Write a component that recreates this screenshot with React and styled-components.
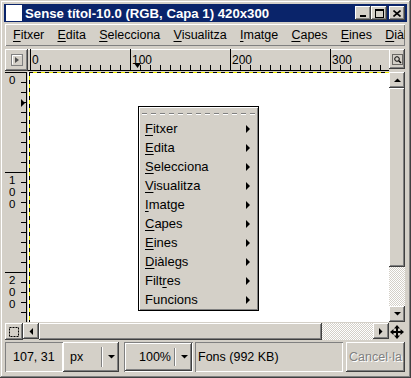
import React from "react";
import styled, { createGlobalStyle, css } from "styled-components";

const FACE = "#d4d0c8";

const raised = css`
  box-shadow: inset -1px -1px #404040, inset 1px 1px #fff, inset -2px -2px #808080,
    inset 2px 2px ${FACE};
`;
const thinRaised = css`
  box-shadow: inset 1px 1px #fff, inset -1px -1px #808080;
`;
const sunken = css`
  box-shadow: inset 1px 1px #808080, inset -1px -1px #fff;
`;

const GlobalStyle = createGlobalStyle`
  * { box-sizing: border-box; }
  html, body { margin: 0; padding: 0; background: ${FACE}; }
  body {
    font-family: "Liberation Sans", Arial, sans-serif;
    font-size: 12.5px;
    color: #000;
  }
`;

const Window = styled.div`
  position: relative;
  width: 411px;
  height: 378px;
  padding: 4px;
  display: flex;
  flex-direction: column;
  background: ${FACE};
  overflow: hidden;
  box-shadow: inset -1px -1px #404040, inset 1px 1px ${FACE}, inset -2px -2px #808080,
    inset 2px 2px #fff;
`;

const TitleBar = styled.div`
  flex: none;
  height: 18px;
  padding: 0 2px;
  display: flex;
  align-items: center;
  background: #0a246a;
  color: #fff;
`;

const AppIcon = styled.div`
  width: 16px;
  height: 16px;
  background: #fff;
`;

const TitleText = styled.span`
  margin-left: 3px;
  font-size: 13.2px;
  font-weight: bold;
  white-space: nowrap;
`;

const TitleButtons = styled.div`
  margin-left: auto;
  display: flex;
`;

const TitleButton = styled.div`
  width: 16px;
  height: 14px;
  margin-left: ${(p) => (p.$gap ? "2px" : "0")};
  display: flex;
  align-items: center;
  justify-content: center;
  background: ${FACE};
  ${raised}
`;

const MenuBar = styled.div`
  flex: none;
  height: 22px;
  margin: 2px 2px 0 1px;
  padding-left: 2px;
  display: flex;
  align-items: center;
  overflow: hidden;
  white-space: nowrap;
  ${thinRaised}
`;

const MenuBarItem = styled.span`
  padding: 0 6.6px;
  &:first-child {
    padding-left: 6px;
  }
`;

const Mnemonic = styled.span`
  text-decoration: underline;
  text-underline-offset: 2px;
`;

const Workspace = styled.div`
  margin: 3px 2px 0 1px;
  display: grid;
  grid-template-columns: 23px 1fr 16px;
  grid-template-rows: 23px 250px 18px;
`;

const CornerButton = styled.div`
  width: 23px;
  height: 22px;
  display: flex;
  align-items: center;
  justify-content: center;
  ${raised}
`;

const ZoomButton = styled.div`
  width: 16px;
  height: 20px;
  display: flex;
  align-items: center;
  justify-content: center;
  ${raised}
`;

const HRulerBox = styled.div`
  overflow: hidden;
  box-shadow: inset 0 1px #fff;
`;

const VRulerBox = styled.div`
  overflow: hidden;
`;

const Canvas = styled.div`
  background: repeating-linear-gradient(90deg, #000 0 4px, #ee0 4px 8px) 1px 0 / 100% 1px
      no-repeat,
    repeating-linear-gradient(180deg, #000 0 4px, #ee0 4px 8px) 1px 0 / 1px 100% no-repeat,
    #fff;
`;

const VScroll = styled.div`
  display: flex;
  flex-direction: column;
`;

const ScrollButton = styled.div`
  flex: none;
  width: 16px;
  height: 16px;
  display: flex;
  align-items: center;
  justify-content: center;
  background: ${FACE};
  ${raised}
`;

const Thumb = styled.div`
  flex: none;
  ${(p) => (p.$vertical ? `height: ${p.$size}px;` : `width: ${p.$size}px;`)}
  background: ${FACE};
  ${raised}
`;

const Track = styled.div`
  flex: 1;
  background-image: repeating-conic-gradient(#fff 0 25%, ${FACE} 0 50%);
  background-size: 2px 2px;
`;

const BottomRow = styled.div`
  grid-column: 1 / -1;
  margin-top: 1px;
  display: flex;
  height: 17px;
`;

const QuickMask = styled.div`
  width: 18px;
  display: flex;
  align-items: center;
  justify-content: center;
  ${raised}
`;

const HScroll = styled.div`
  flex: 1;
  display: flex;
`;

const NavIcon = styled.div`
  width: 16px;
  display: flex;
  align-items: center;
  justify-content: center;
`;

const StatusBar = styled.div`
  flex: none;
  height: 30px;
  margin: 2px 2px 0 1px;
  display: flex;
  white-space: nowrap;
`;

const CoordBox = styled.div`
  width: 58px;
  padding-left: 8px;
  display: flex;
  align-items: center;
  ${sunken}
`;

const Combo = styled.div`
  width: ${(p) => p.$width}px;
  display: flex;
  align-items: stretch;
  background: ${FACE};
  ${raised}
`;

const ComboLabel = styled.div`
  flex: 1;
  display: flex;
  align-items: center;
  justify-content: ${(p) => (p.$right ? "flex-end" : "flex-start")};
  padding: ${(p) => (p.$right ? "0 3px 0 0" : "0 0 0 7px")};
`;

const ComboSep = styled.div`
  width: 2px;
  margin: 5px 0;
  border-left: 1px solid #808080;
  border-right: 1px solid #fff;
`;

const ComboArrow = styled.div`
  width: 16px;
  display: flex;
  align-items: center;
  justify-content: center;
`;

const ZoomFrame = styled.div`
  width: 69px;
  margin-left: 5px;
  padding: 1px;
  display: flex;
  ${sunken}
`;

const FonsBox = styled.div`
  width: 148px;
  margin-left: 2px;
  padding-left: 3px;
  display: flex;
  align-items: center;
  ${sunken}
`;

const CancelButton = styled.div`
  flex: 1;
  margin-left: 3px;
  display: flex;
  align-items: center;
  justify-content: center;
  color: #808080;
  text-shadow: 1px 1px #fff;
  ${raised}
`;

const PopupMenu = styled.div`
  position: absolute;
  left: 138px;
  top: 106px;
  width: 121px;
  padding: 1px 1px 1px;
  border: 1px solid #000;
  background: ${FACE};
  box-shadow: inset 1px 1px #fff, inset -1px -1px #808080;
`;

const Tearoff = styled.div`
  height: 11px;
  padding: 5px 2px 0;
  &::before {
    content: "";
    display: block;
    height: 2px;
    background: repeating-linear-gradient(90deg, #808080 0 5px, transparent 5px 9px) top / 100%
        1px no-repeat,
      repeating-linear-gradient(90deg, #fff 0 5px, transparent 5px 9px) bottom / 100% 1px
        no-repeat;
  }
`;

const PopupItem = styled.div`
  height: 19px;
  padding: 0 7px 0 5px;
  display: flex;
  align-items: center;
  justify-content: space-between;
  font-size: 13px;
`;

const SubArrow = styled.span`
  width: 0;
  height: 0;
  border-left: 4px solid #000;
  border-top: 4px solid transparent;
  border-bottom: 4px solid transparent;
`;

function Label({ text, at }) {
  if (at < 0) return text;
  return (
    <>
      {text.slice(0, at)}
      <Mnemonic>{text[at]}</Mnemonic>
      {text.slice(at + 1)}
    </>
  );
}

function Tri({ dir }) {
  const pts = {
    up: "0,4 7,4 3.5,0.5",
    down: "0,0 7,0 3.5,3.5",
    left: "4,0 4,7 0.5,3.5",
    right: "0,0 0,7 3.5,3.5",
  }[dir];
  const v = dir === "up" || dir === "down";
  return (
    <svg width={v ? 7 : 4} height={v ? 4 : 7}>
      <polygon points={pts} fill="#000" />
    </svg>
  );
}

function HRuler() {
  const ticks = [];
  for (let v = 0; v <= 360; v += 10) {
    const x = v + 2.5;
    const len = v % 100 === 0 ? 22 : 5;
    ticks.push(<line key={v} x1={x} x2={x} y1={21 - len} y2={21} stroke="#000" />);
  }
  const mx = 107 + 2.5;
  return (
    <svg width="361" height="23">
      {ticks}
      {[0, 100, 200, 300].map((v) => (
        <text key={v} x={v + 4} y="15" fontSize="12" fontFamily="Liberation Sans">
          {v}
        </text>
      ))}
      <line x1="0" x2="361" y1="21.5" y2="21.5" stroke="#000" />
      <polygon points={`${mx - 3.5},14 ${mx + 3.5},14 ${mx},19`} fill="#000" />
    </svg>
  );
}

function VRuler() {
  const ticks = [];
  for (let v = 0; v <= 250; v += 10) {
    const y = v + 0.5;
    const len = v % 100 === 0 ? 23 : 6;
    ticks.push(<line key={v} x1={22 - len} x2={22} y1={y} y2={y} stroke="#000" />);
  }
  const labels = [];
  [0, 100, 200].forEach((v) => {
    String(v)
      .split("")
      .forEach((d, i) => {
        labels.push(
          <text key={`${v}-${i}`} x="4" y={v + 12 + i * 12} fontSize="11.5" fontFamily="Liberation Sans">
            {d}
          </text>
        );
      });
  });
  return (
    <svg width="23" height="250">
      {ticks}
      {labels}
      <line x1="21.5" x2="21.5" y1="0" y2="250" stroke="#000" />
      <polygon points="16,27 16,35 20,31" fill="#000" />
    </svg>
  );
}

const menuBarItems = [
  ["Fitxer", 0],
  ["Edita", 0],
  ["Selecciona", 0],
  ["Visualitza", 0],
  ["Imatge", 0],
  ["Capes", 0],
  ["Eines", 0],
  ["Diàlegs", 0],
];

const popupItems = [
  ["Fitxer", 0],
  ["Edita", 0],
  ["Selecciona", 0],
  ["Visualitza", 0],
  ["Imatge", 0],
  ["Capes", 0],
  ["Eines", 0],
  ["Diàlegs", 0],
  ["Filtres", 4],
  ["Funcions", -1],
];

export default function App() {
  return (
    <>
      <GlobalStyle />
      <Window>
        <TitleBar>
          <AppIcon />
          <TitleText>Sense títol-10.0 (RGB, Capa 1) 420x300</TitleText>
          <TitleButtons>
            <TitleButton>
              <svg width="8" height="8">
                <rect x="1" y="6" width="6" height="2" fill="#000" />
              </svg>
            </TitleButton>
            <TitleButton>
              <svg width="9" height="9">
                <rect x="0.5" y="0.5" width="8" height="8" fill="none" stroke="#000" />
                <rect x="0" y="1" width="9" height="1" fill="#000" />
              </svg>
            </TitleButton>
            <TitleButton $gap>
              <svg width="8" height="7">
                <path d="M0.5 0.5 L7.5 6.5 M7.5 0.5 L0.5 6.5" stroke="#000" strokeWidth="1.6" />
              </svg>
            </TitleButton>
          </TitleButtons>
        </TitleBar>

        <MenuBar>
          {menuBarItems.map(([t, i]) => (
            <MenuBarItem key={t}>
              <Label text={t} at={i} />
            </MenuBarItem>
          ))}
        </MenuBar>

        <Workspace>
          <CornerButton>
            <svg width="12" height="12">
              <rect x="0.5" y="0.5" width="11" height="11" fill={FACE} stroke="#808080" />
              <path d="M1.5 10.5 V1.5 H10.5" stroke="#fff" fill="none" />
              <polygon points="4,3 4,9 8,6" fill="#505050" />
            </svg>
          </CornerButton>
          <HRulerBox>
            <HRuler />
          </HRulerBox>
          <ZoomButton>
            <svg width="11" height="11">
              <rect x="0.5" y="0.5" width="10" height="10" fill="none" stroke="#000" strokeDasharray="1 1" />
              <circle cx="5" cy="5" r="2.3" fill="none" stroke="#000" />
              <path d="M6.8 6.8 L9 9" stroke="#000" strokeWidth="1.5" />
            </svg>
          </ZoomButton>

          <VRulerBox>
            <VRuler />
          </VRulerBox>
          <Canvas />
          <VScroll>
            <ScrollButton>
              <Tri dir="up" />
            </ScrollButton>
            <Thumb $vertical $size={179} />
            <Track />
            <ScrollButton>
              <Tri dir="down" />
            </ScrollButton>
          </VScroll>

          <BottomRow>
            <QuickMask>
              <svg width="10" height="10">
                <rect x="0.5" y="0.5" width="9" height="9" fill="none" stroke="#000" strokeDasharray="2 1" />
              </svg>
            </QuickMask>
            <HScroll>
              <ScrollButton>
                <Tri dir="left" />
              </ScrollButton>
              <Thumb $size={283} />
              <Track />
              <ScrollButton>
                <Tri dir="right" />
              </ScrollButton>
            </HScroll>
            <NavIcon>
              <svg width="14" height="14">
                <path d="M7 1 V13 M1 7 H13" stroke="#000" strokeWidth="2" />
                <polygon points="7,0 4,3.5 10,3.5" fill="#000" />
                <polygon points="7,14 4,10.5 10,10.5" fill="#000" />
                <polygon points="0,7 3.5,4 3.5,10" fill="#000" />
                <polygon points="14,7 10.5,4 10.5,10" fill="#000" />
              </svg>
            </NavIcon>
          </BottomRow>
        </Workspace>

        <StatusBar>
          <CoordBox>107, 31</CoordBox>
          <Combo $width={56}>
            <ComboLabel>px</ComboLabel>
            <ComboSep />
            <ComboArrow>
              <Tri dir="down" />
            </ComboArrow>
          </Combo>
          <ZoomFrame>
            <Combo $width={67}>
              <ComboLabel $right>100%</ComboLabel>
              <ComboSep />
              <ComboArrow>
                <Tri dir="down" />
              </ComboArrow>
            </Combo>
          </ZoomFrame>
          <FonsBox>Fons (992 KB)</FonsBox>
          <CancelButton>Cancel·la</CancelButton>
        </StatusBar>

        <PopupMenu>
          <Tearoff />
          {popupItems.map(([t, i]) => (
            <PopupItem key={t}>
              <span>
                <Label text={t} at={i} />
              </span>
              <SubArrow />
            </PopupItem>
          ))}
        </PopupMenu>
      </Window>
    </>
  );
}
